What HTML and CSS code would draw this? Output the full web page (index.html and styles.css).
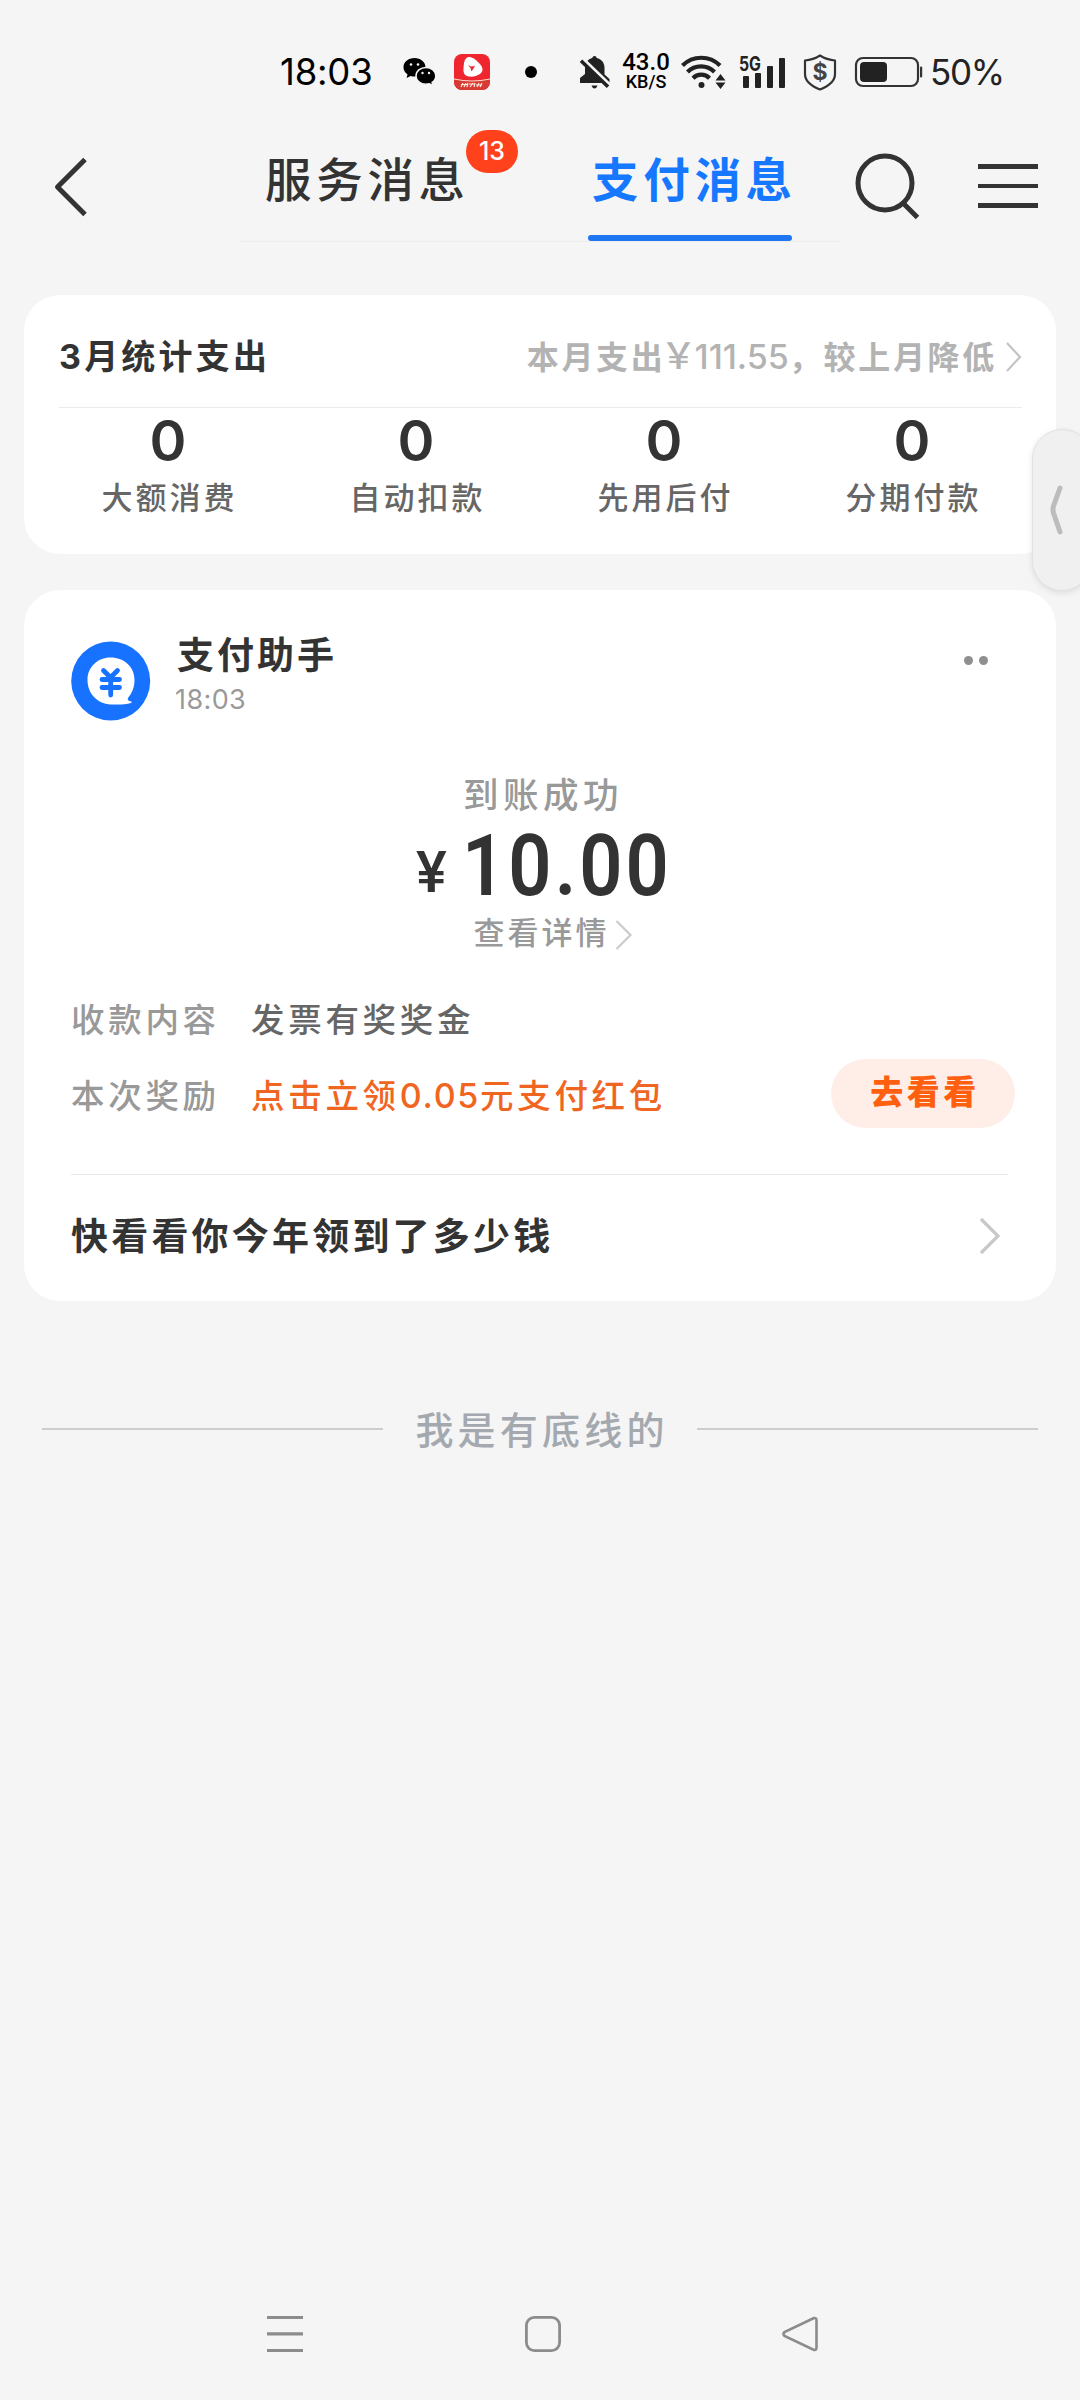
FILE: index.html
```html
<!DOCTYPE html>
<html lang="zh-CN">
<head>
<meta charset="utf-8">
<title>支付消息</title>
<link rel="stylesheet" href="styles.css">
</head>
<body>
<div class="screen">
  <header class="status">
    <span class="clock">18:03</span>
    <svg class="i-wechat" width="34" height="30" viewBox="0 0 34 30"><path d="M11.5 1C5.200 1 .5 5 .5 10.200c0 3 1.500 5.400 4 7.100L3.600 21l4-2c1.500.4 2.800.6 4.200.6 6-.2 10.700-4.300 10.700-9.400S17.500 1 11.500 1z"/><path class="halo" d="M23 10.500c-5.700 0-10 3.700-10 8.400s4.300 8.300 10 8.300c1.200 0 2.300-.2 3.400-.5l3.600 1.900-.9-3.200c2.300-1.600 3.700-3.800 3.700-6.500 0-4.700-4.300-8.400-9.800-8.400z"/><g fill="#f5f5f5"><circle cx="8" cy="7.500" r="1.300"/><circle cx="15" cy="7.500" r="1.300"/><circle cx="19.500" cy="16" r="1.200"/><circle cx="26" cy="16" r="1.200"/></g></svg>
    <svg class="i-app" width="36" height="36" viewBox="0 0 36 36"><rect width="36" height="36" rx="8" fill="#ef2530"/><path d="M0 25q18 4 36 0v3a8 8 0 0 1-8 8H8a8 8 0 0 1-8-8z" fill="#d73a33"/><path d="M0 25q18 4 36 0" fill="none" stroke="#ffd9cf" stroke-width="1"/><path d="M12 4.500c3-3 8-1 13 4.500 4 4 5 8 1 11-3 2-7 3-11 2.500-4-.5-6-3-5.500-8 .3-4 .5-8 2.500-10z" fill="#fff"/><path d="m14 11 3 1.500 4-.5-1.500 2.500-2 3-1-3.500z" fill="#ef2530"/><path d="M7 33l2-4M10 33l2-4M13 33l1-4M16 33l3-4M20 33l1-4M23 33l2-4M26 33l2-4M7 30.500h6M15 30h5M22 31h6" stroke="#ffe9e0" stroke-width="1.200" fill="none"/></svg>
    <i class="notice-dot"></i>
    <svg class="i-bell" width="32" height="36" viewBox="0 0 32 36" fill="#222"><path d="M15.500 2c1.300 0 2 .8 2.200 2 4.700 1 7.800 4.700 7.800 9.500v7l5 4.500v4H1v-5l5-4v-7c0-4.300 3-8 7.300-9 .2-1.200 1-2 2.200-2z"/><path d="M12.500 31.500h6q-1 3-3 3t-3-3z"/><path d="M2 3.500 32 32.500" stroke="#f5f5f5" stroke-width="4"/><path d="M2 6.800 29 32.800" stroke="#222" stroke-width="3.600"/></svg>
    <span class="speed"><b>43.0</b><span>KB/S</span></span>
    <svg class="i-wifi" width="46" height="36" viewBox="0 0 46 36" fill="none" stroke="#222" stroke-width="4.200"><path d="M2.500 11.500a26.500 26.500 0 0 1 37.500 0M7.500 18a19 19 0 0 1 27 0M13 24.200a11.500 11.500 0 0 1 16.500 0"/><circle cx="21.500" cy="31" r="3" fill="#222" stroke="none"/><path d="M35.500 26.500 40.500 20l5 6.500zM35.500 28.500l5 6.500 5-6.500z" fill="#222" stroke="none"/></svg>
    <svg class="i-signal" width="50" height="36" viewBox="0 0 50 36" fill="#222"><text x="0" y="17" class="g5" textLength="22" lengthAdjust="spacingAndGlyphs">5G</text><rect x="4" y="22" width="6" height="12" rx="1"/><rect x="16" y="19" width="6" height="15" rx="1"/><rect x="28" y="12" width="6" height="22" rx="1"/><rect x="40" y="4" width="6" height="30" rx="1"/></svg>
    <svg class="i-shield" width="36" height="38" viewBox="0 0 36 38"><path d="M18 2.500c5 3.200 10 4.600 15 5V21c0 7.500-6 12-15 15.500C9 33 3 28.500 3 21V7.500c5-.4 10-1.800 15-5z" fill="none" stroke="#333" stroke-width="2.200" stroke-linejoin="round"/><text x="18" y="27" text-anchor="middle" class="dollar">$</text></svg>
    <svg class="i-battery" width="70" height="32" viewBox="0 0 70 32"><rect x="2" y="2" width="62" height="28" rx="7" fill="none" stroke="#333" stroke-width="2.200"/><rect x="6" y="6" width="27" height="20" rx="4" fill="#222"/><rect x="66" y="10.500" width="2.200" height="11" rx="1" fill="#333"/></svg>
    <span class="percent">50%</span>
  </header>

  <nav class="topbar">
    <svg class="back" width="40" height="60" viewBox="0 0 40 60"><path d="M36 3.500 8.500 31 36 58.500" fill="none" stroke="#333" stroke-width="5" stroke-linejoin="round"/></svg>
    <div class="tabs">
      <div class="tab">服务消息<span class="badge">13</span></div>
      <div class="tab active">支付消息</div>
    </div>
    <svg class="search" width="68" height="70" viewBox="0 0 68 70" fill="none" stroke="#333" stroke-width="5"><circle cx="32" cy="33" r="27"/><path d="m50 53 14.500 14.500"/></svg>
    <div class="menu"><i></i><i></i><i></i></div>
  </nav>

  <section class="card stats">
    <div class="stats-head">
      <h2>3月统计支出</h2>
      <span class="summary">本月支出<span class="yen">￥</span><span class="num">111.55</span>，较上月降低</span>
      <svg width="17" height="32" viewBox="0 0 17 32"><path d="m2 2 13 14L2 30" fill="none" stroke="#c4c4c4" stroke-width="2.200"/></svg>
    </div>
    <div class="stats-grid">
      <div><b>0</b><span>大额消费</span></div>
      <div><b>0</b><span>自动扣款</span></div>
      <div><b>0</b><span>先用后付</span></div>
      <div><b>0</b><span>分期付款</span></div>
    </div>
  </section>

  <section class="card message">
    <div class="sender">
      <svg width="80" height="80" viewBox="0 0 80 80"><circle cx="39.700" cy="40" r="39.500" fill="#1672ff"/><path d="M39.500 16.500c-13 0-23 9.500-23 22.500 0 14 10.500 24.500 25 24.500 7 0 13 .3 18.500-1.500 1-.4 1-1.300 0-1.500-2.500-.5-4-1.500-3-3.500 4-5 6.500-10.500 6.500-18 0-13-10-22.500-24-22.500z" fill="#fff"/><path d="m32.500 29.500 7 7 7-7M31 38.500h17.500M31 46.500h17.500M39.700 37v17" fill="none" stroke="#1672ff" stroke-width="4.800" stroke-linecap="round"/></svg>
      <div class="who"><b>支付助手</b><span>18:03</span></div>
      <div class="more"><i></i><i></i></div>
    </div>
    <div class="result">到账成功</div>
    <div class="amount"><span>¥</span><b>10.00</b></div>
    <div class="detail">查看详情<svg width="18" height="32" viewBox="0 0 18 32"><path d="m1.500 2 14 14-14 14" fill="none" stroke="#ccc" stroke-width="2.200"/></svg></div>
    <div class="row"><span class="key">收款内容</span><span class="val">发票有奖奖金</span></div>
    <div class="row reward"><span class="key">本次奖励</span><span class="val">点击立领<span class="num">0.05</span>元支付红包</span><span class="go">去看看</span></div>
    <div class="more-link"><span>快看看你今年领到了多少钱</span><svg width="24" height="38" viewBox="0 0 24 38"><path d="m3 2 17 17L3 36" fill="none" stroke="#c8c8c8" stroke-width="3.200"/></svg></div>
  </section>

  <div class="bottom-line"><span>我是有底线的</span></div>

  <footer class="sysnav">
    <svg width="36" height="36" viewBox="0 0 36 36" fill="#8c8c8c"><path d="M0 0h36v3H0zM0 16.300h36v3.300H0zM0 33h36v3H0z"/></svg>
    <svg width="36" height="36" viewBox="0 0 36 36"><rect x="1.400" y="1.400" width="33.200" height="33.200" rx="8" fill="none" stroke="#8c8c8c" stroke-width="2.800"/></svg>
    <svg width="36" height="36" viewBox="0 0 36 36"><path d="M32 2 2.500 16q-2 2 0 4L32 34q2.500.5 2.500-2.500v-27Q34.500 1.500 32 2z" fill="none" stroke="#8c8c8c" stroke-width="2.600"/></svg>
  </footer>

  <aside class="handle"><svg width="16" height="54" viewBox="0 0 16 54"><path d="M12 5 5.500 23q-1 3.500 0 7L12 49" fill="none" stroke="#bcbcbc" stroke-width="5" stroke-linecap="round"/></svg></aside>
</div>
</body>
</html>
```
FILE: styles.css
```css
* { box-sizing: border-box; }
body { margin: 0; background: #f5f5f5; color: #333; font-family: Inter, "Noto Sans CJK SC", sans-serif; }
svg { display: block; flex: none; overflow: visible; }
i { display: block; flex: none; }
h2 { margin: 0; }
.screen { position: relative; width: 1080px; height: 2400px; overflow: hidden; display: flex; flex-direction: column; white-space: nowrap; }

/* status bar */
.status { height: 144px; padding-left: 280px; display: flex; align-items: center; flex: none; color: #000; }
.clock { width: 123px; font-size: 36.500px; letter-spacing: -0.2px; }
.halo { stroke: #f5f5f5; stroke-width: 1.5; }
.i-app { margin-left: 17px; }
.notice-dot { width: 12px; height: 12px; border-radius: 50%; background: #000; margin-left: 35px; }
.i-bell { margin-left: 42px; }
.speed { width: 52px; margin-left: 9px; display: flex; flex-direction: column; align-items: center; line-height: 19px; font-family: Roboto, sans-serif; }
.speed b { font-size: 24px; font-weight: 500; }
.speed span { font-size: 18px; font-weight: 500; }
.i-wifi { margin-left: 8px; }
.i-signal { margin-left: 13px; }
.g5 { font-size: 20px; font-weight: 700; }
.i-shield { margin-left: 13px; }
.dollar { font-size: 23px; font-weight: 700; fill: #444; }
.i-battery { margin-left: 16px; }
.percent { margin-left: 6px; font-size: 35px; letter-spacing: -1.300px; color: #222; }

/* top bar */
.topbar { display: flex; height: 98px; margin-bottom: 53px; flex: none; }
.back { margin: 12px 0 0 49px; }
.tabs { width: 600px; height: 98px; margin-left: 151px; display: flex; justify-content: space-between; border-bottom: 1px solid #ededed; padding: 0 48px 0 18px; }
.tab { position: relative; width: 204px; height: 97px; text-align: center; font-size: 46.500px; line-height: 72px; letter-spacing: 4.700px; padding-left: 7px; font-weight: 500; }
.tab.active { color: #1677ff; font-weight: 700; padding-left: 4px; }
.tab.active::after { content: ""; position: absolute; left: 0; bottom: 0; width: 204px; height: 6px; border-radius: 3px; background: #1f76f3; }
.badge { position: absolute; left: 208px; top: -14px; width: 52px; height: 43px; border-radius: 22px; background: #ff411c; color: #fff; font-size: 25px; line-height: 43px; letter-spacing: 0; font-weight: 500; }
.search { margin: 6px 0 0 13px; }
.menu { margin: 20px 0 0 57px; width: 60px; display: flex; flex-direction: column; gap: 15px; }
.menu i { height: 4.700px; background: #333; }

/* cards */
.card { margin: 0 24px; background: #fff; border-radius: 36px; flex: none; }
.stats { height: 259px; padding-top: 12px; margin-bottom: 36px; }
.stats-head { margin: 0 34px 0 35px; height: 101px; display: flex; align-items: center; border-bottom: 1.500px solid #ebebeb; }
.stats-head h2 { font-size: 34px; line-height: 50px; letter-spacing: 3.200px; font-weight: 700; margin-right: auto; }
.summary { font-size: 32px; line-height: 50px; letter-spacing: 2.700px; font-weight: 700; color: #b3b3b3; margin-right: 8px; }
.summary .yen { font-family: "Noto Sans CJK SC", sans-serif; font-size: 36px; line-height: 0; font-weight: 500; margin: 0 -2px 0 -5px; letter-spacing: 0; }
.summary .num { font-size: 34px; font-weight: 500; letter-spacing: 0; }
.stats-grid { display: grid; grid-template-columns: repeat(4, 248px); justify-content: center; text-align: center; padding-top: 3px; }
.stats-grid b { display: block; font-size: 56px; line-height: 60px; font-weight: 600; }
.stats-grid span { display: block; font-size: 31px; line-height: 48px; letter-spacing: 3px; padding-left: 3px; margin-top: 3px; color: #666; font-weight: 500; }

.message { height: 711px; padding: 45px 41px 0 47px; }
.sender { display: flex; height: 85px; }
.sender > svg { margin-top: 6px; }
.who { margin-left: 24px; display: flex; flex-direction: column; flex: 1; }
.who b { font-size: 37px; line-height: 41px; letter-spacing: 3px; padding-left: 2px; }
.who span { font-size: 27px; line-height: 40px; letter-spacing: 0.4px; margin-top: 4px; color: #999; }
.more { display: flex; gap: 6px; margin: 21px 27px 0 0; }
.more i { width: 9px; height: 9px; border-radius: 50%; background: #8f8f8f; }
.result { margin-top: 50px; height: 50px; line-height: 52px; text-align: center; font-size: 35.500px; letter-spacing: 4.500px; color: #999; font-weight: 500; }
.amount { height: 90px; display: flex; align-items: baseline; font-family: Roboto, sans-serif; line-height: 92px; gap: 15px; padding-left: 345px; }
.amount span { font-size: 58px; font-weight: 500; line-height: 60px; transform: translateY(-3px); }
/* condensed numerals for the sum */
.amount b { font-size: 86px; font-weight: 600; letter-spacing: 3.500px; transform: scaleX(.88); transform-origin: left; }
.detail { height: 46px; display: flex; align-items: center; justify-content: center; font-size: 31px; line-height: 44px; letter-spacing: 3px; color: #999; font-weight: 500; padding-left: 20px; }
.detail svg { margin-left: 5px; margin-top: 4px; }
.row { display: flex; align-items: center; height: 46px; margin-top: 38px; font-size: 33.500px; letter-spacing: 3.700px; font-weight: 500; }
.key { width: 180px; color: #999; }
.val { color: #666; }
.reward { height: 70px; margin-top: 18px; }
.reward .val { color: #f0651f; }
.reward .num { font-size: 34px; letter-spacing: 1.700px; }
.go { margin-left: auto; width: 184px; height: 69px; border-radius: 35px; background: #ffede7; color: #ff6010; text-align: center; line-height: 67px; font-size: 33px; padding-left: 4px; letter-spacing: 3.500px; font-weight: 900; }
.more-link { margin: 46px 7px 0 0; border-top: 1.500px solid #e8e8e8; height: 122px; display: flex; align-items: center; justify-content: space-between; padding-right: 6px; font-size: 37px; letter-spacing: 3.200px; font-weight: 700; }
.more-link span { margin-bottom: 4px; }

/* end of list */
.bottom-line { margin: 98px 42px 0; height: 60px; display: flex; align-items: center; gap: 32px; color: #a4a9b0; font-size: 38px; font-weight: 500; letter-spacing: 4.200px; }
.bottom-line::before, .bottom-line::after { content: ""; flex: 1; height: 2.500px; background: #cdcdcd; }
.bottom-line span { margin: 0 -4px 3px 0; }

/* system navigation */
.sysnav { margin: auto 262px 48px 267px; display: flex; justify-content: space-between; }

.handle { position: absolute; left: 1032px; top: 429px; width: 60px; height: 162px; border-radius: 36px; background: #f0f0f0; border: 1px solid #e2e2e2; box-shadow: 0 2px 6px rgba(0,0,0,.1); display: flex; align-items: center; padding-left: 15px; }
```
